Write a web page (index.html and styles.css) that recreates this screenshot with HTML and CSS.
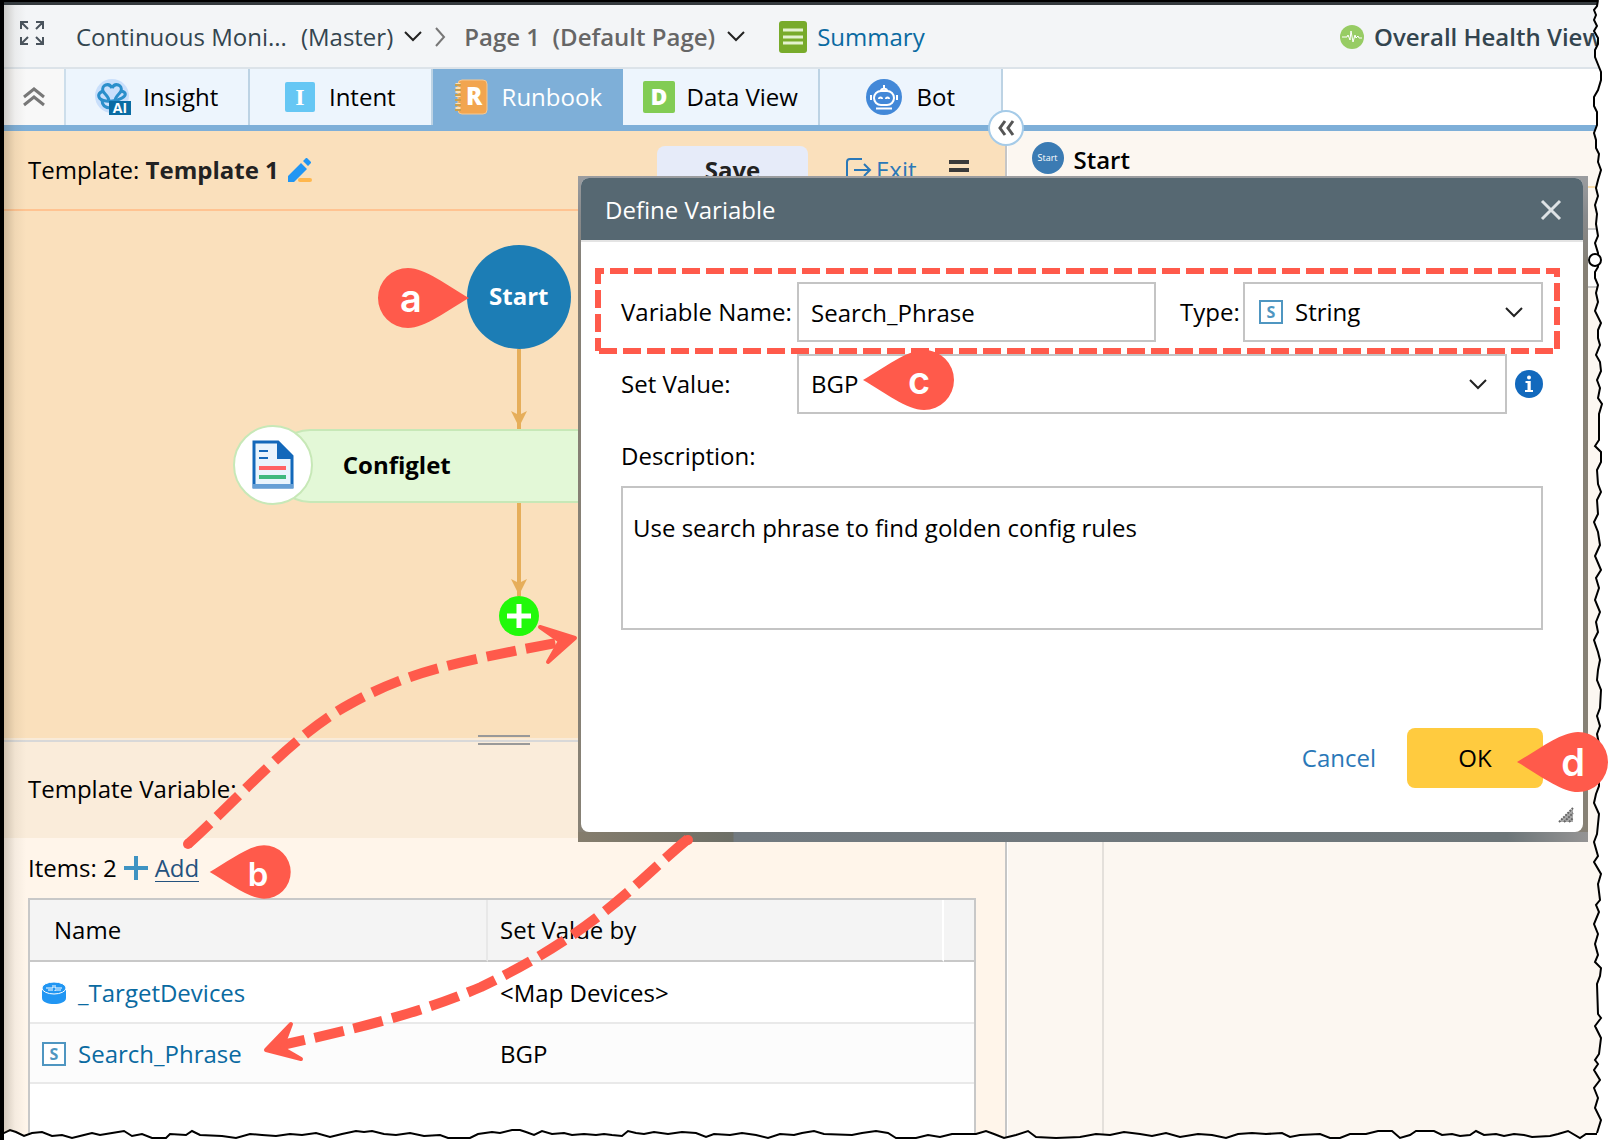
FILE: index.html
```html
<!DOCTYPE html>
<html lang="en">
<head>
<meta charset="utf-8">
<title>Runbook Template - Define Variable</title>
<link rel="stylesheet" href="styles.css">
</head>
<body>
<div class="page">
  <header class="topbar">
    <button class="icon-btn expand" aria-label="Full screen">
      <svg width="24" height="24" viewBox="0 0 24 24" fill="none" stroke="#4a545d" stroke-width="2"><path d="M1 8V1h7M1 1l7 7M16 1h7v7M23 1l-7 7M1 16v7h7M1 23l7-7M23 16v7h-7M23 23l-7-7"/></svg>
    </button>
    <nav class="crumbs">
      <a href="#" class="crumb">Continuous Moni...</a>
      <a href="#" class="crumb master">(Master)</a>
      <svg class="chev" width="18" height="12" viewBox="0 0 18 12"><path d="M1 1l8 8 8-8" fill="none" stroke="#222" stroke-width="2"/></svg>
      <svg class="sep" width="12" height="20" viewBox="0 0 12 20"><path d="M2 1l8 9-8 9" fill="none" stroke="#777" stroke-width="2"/></svg>
      <a href="#" class="crumb current">Page 1&nbsp; (Default Page)</a>
      <svg class="chev last" width="18" height="12" viewBox="0 0 18 12"><path d="M1 1l8 8 8-8" fill="none" stroke="#222" stroke-width="2"/></svg>
    </nav>
    <a href="#" class="summary">
      <svg width="28" height="32" viewBox="0 0 28 32"><rect width="28" height="32" rx="3" fill="#78ab2b"/><path d="M4 9h20M4 16h20M4 22h20" stroke="#e3f2cf" stroke-width="3"/></svg>
      Summary
    </a>
    <a href="#" class="health">
      <svg width="24" height="24" viewBox="0 0 24 24"><circle cx="12" cy="12" r="12" fill="#97cc64"/><path d="M2 12h5l1-2 2 5 1-9 2 11 2-7 1 3 2-2 1 2h3" fill="none" stroke="#fff" stroke-width="1"/></svg>
      Overall Health View
    </a>
  </header>

  <div class="tabstrip">
    <nav class="tabs">
      <button class="collapse" aria-label="Collapse">
        <svg width="22" height="20" viewBox="0 0 22 20" fill="none" stroke="#777" stroke-width="3"><path d="M1 10l10-8 10 8M1 18l10-8 10 8"/></svg>
      </button>
      <button class="tab insight">
        <svg width="36" height="36" viewBox="0 0 36 36"><circle cx="17" cy="17" r="17" fill="#c9dffb"/><g fill="none" stroke="#2b8fcb" stroke-width="3"><path d="M17 9c-3-6-11-3-9 3 1 3 6 5 6 10M17 9c3-6 11-3 9 3-1 3-6 5-6 10"/><path d="M8 12c-7 3-5 9 3 10 6 1 11 0 16-3 5-3 4-6-1-7"/><path d="M7 21c0 6 4 8 9 8"/></g><rect x="14" y="22" width="22" height="14" fill="#0b6ca3"/><text x="25" y="34" text-anchor="middle" font-family="Open Sans, sans-serif" font-weight="700" font-size="14" fill="#fff">AI</text></svg>
        Insight
      </button>
      <button class="tab intent">
        <svg width="30" height="30" viewBox="0 0 30 30"><rect width="30" height="30" rx="2" fill="#66c7f4"/><text x="15" y="23" text-anchor="middle" font-family="Liberation Serif, serif" font-weight="700" font-size="24" fill="#fff">I</text></svg>
        Intent
      </button>
      <button class="tab runbook active">
        <svg width="34" height="36" viewBox="0 0 34 36"><rect x="4" y="1" width="29" height="34" rx="4" fill="#f2a54f" stroke="#f6c892" stroke-width="1"/><path d="M4 4v28" stroke="#fbe0b8" stroke-width="5" stroke-dasharray="2 2"/><path d="M4 5v28" stroke="#c9a04e" stroke-width="6" stroke-dasharray="2 3"/><text x="20" y="26" text-anchor="middle" font-family="Open Sans, sans-serif" font-weight="800" font-size="24" fill="#fff">R</text></svg>
        Runbook
      </button>
      <button class="tab dataview">
        <svg width="32" height="32" viewBox="0 0 32 32"><rect width="32" height="32" rx="2" fill="#82cc54"/><text x="16" y="24" text-anchor="middle" font-family="Open Sans, sans-serif" font-weight="800" font-size="23" fill="#fff">D</text></svg>
        Data View
      </button>
      <button class="tab bot">
        <svg width="36" height="36" viewBox="0 0 36 36"><circle cx="18" cy="18" r="18" fill="#4288d8"/><g fill="none" stroke="#fff" stroke-width="2"><rect x="8" y="12" width="20" height="14" rx="7"/><path d="M15 12c0-3 6-3 6 0M18 9V6M5 16v5M31 16v5M10 29.500h16M13 20c0-2 3-2 3 0M20 20c0-2 3-2 3 0"/></g></svg>
        Bot
      </button>
    </nav>
    <button class="fold" aria-label="Fold panel">
      <svg width="18" height="16" viewBox="0 0 18 16" fill="none" stroke="#555" stroke-width="3"><path d="M8 1L3 8l5 7M16 1l-5 7 5 7"/></svg>
    </button>
  </div>

  <main class="work">
    <section class="left">
      <div class="template-head">
        <span>Template: <b>Template 1</b></span>
        <button class="icon-btn pencil" aria-label="Rename">
          <svg width="24" height="25" viewBox="0 0 24 25"><path d="M0 24v-6L13 5l6 6L6 24zM15 3l3-3h1l4 4v1l-3 3z" fill="#2196f3"/><rect x="10" y="20" width="14" height="4" rx="2" fill="#ffb74d"/></svg>
        </button>
        <button class="save">Save</button>
        <a href="#" class="exit">
          <svg width="25" height="24" viewBox="0 0 25 24" fill="none" stroke="#2a78b8" stroke-width="2"><path d="M16 1H4Q1 1 1 4v16q0 3 3 3h12M8 12h15M18 6l6 6-6 6"/></svg>
          Exit
        </a>
        <button class="icon-btn menu" aria-label="Menu">
          <svg width="20" height="20" viewBox="0 0 20 20"><path d="M0 2h20M0 10h20M0 18h20" stroke="#3a3a3a" stroke-width="4"/></svg>
        </button>
      </div>

      <div class="canvas">
        <div class="node-start">Start</div>
        <svg class="link" width="16" height="80" viewBox="0 0 16 80"><path d="M6 0h4v80H6zM0 62l8 4 8-4-8 16z" fill="#e6ae5a"/></svg>
        <div class="node-configlet">
          <span class="node-icon">
            <svg width="42" height="50" viewBox="0 0 42 50"><path d="M2 2h24l14 14v31H2z" fill="#e9f4fd" stroke="#1368ba" stroke-width="3"/><path d="M25 2l15 15v2H25z" fill="#1368ba"/><path d="M1 46h40" stroke="#659fd6" stroke-width="4"/><path d="M7 11h9M7 18h9" stroke="#1368ba" stroke-width="2"/><path d="M7 28h27" stroke="#ff6264" stroke-width="4"/><path d="M7 37h27" stroke="#3fb97e" stroke-width="4"/></svg>
          </span>
          Configlet
        </div>
        <svg class="link" width="16" height="93" viewBox="0 0 16 93"><path d="M6 0h4v93H6zM0 76l8 4 8-4-8 16z" fill="#e6ae5a"/></svg>
        <button class="add-node" aria-label="Add node">
          <svg width="24" height="24" viewBox="0 0 24 24"><path d="M12 0v24M0 12h24" stroke="#fff" stroke-width="5"/></svg>
        </button>
      </div>

      <div class="splitter"><span class="grip"></span></div>
      <h2 class="var-title">Template Variable:</h2>
      <div class="items-row">
        <span>Items: 2</span>
        <svg width="24" height="24" viewBox="0 0 24 24"><path d="M12 0v24M0 12h24" stroke="#3f93c2" stroke-width="4"/></svg>
        <a href="#" class="add">Add</a>
      </div>
      <div class="table-box">
        <table class="vars">
          <colgroup><col class="c1"><col class="c2"><col class="c3"></colgroup>
          <thead><tr><th class="first">Name</th><th>Set Value by</th><th></th></tr></thead>
          <tbody>
            <tr>
              <td><a href="#" class="var"><svg width="24" height="24" viewBox="0 0 24 24"><path d="M0 7v10c0 8 24 8 24 0V7z" fill="#2196f3"/><ellipse cx="12" cy="7" rx="12" ry="6" fill="#2196f3" stroke="#fff" stroke-width="1"/><path d="M4 7h7V4M11 9H6M13 4v3h7M13 10V9h6" fill="none" stroke="#fff" stroke-width="1"/></svg>_TargetDevices</a></td>
              <td>&lt;Map Devices&gt;</td><td></td>
            </tr>
            <tr class="alt">
              <td><a href="#" class="var"><span class="s-icon">S</span>Search_Phrase</a></td>
              <td>BGP</td><td></td>
            </tr>
          </tbody>
        </table>
      </div>
    </section>

    <section class="right">
      <div class="right-head"><span class="start-dot">Start</span><b>Start</b></div>
      <div class="right-tools"></div>
      <div class="right-field"></div>
      <div class="right-body"></div>
    </section>
  </main>

  <div class="backdrop">
    <form class="dialog" role="dialog" aria-label="Define Variable">
      <div class="dialog-head">
        <h1>Define Variable</h1>
        <button type="button" class="icon-btn" aria-label="Close">
          <svg width="20" height="20" viewBox="0 0 20 20"><path d="M1 1l18 18M19 1L1 19" stroke="#dde2e5" stroke-width="3"/></svg>
        </button>
      </div>
      <div class="dialog-body">
        <div class="row">
          <label class="lbl" for="vname">Variable Name:</label>
          <input class="field name" id="vname" type="text" value="Search_Phrase">
          <label class="type-lbl" for="vtype">Type:</label>
          <div class="pick type">
            <span class="s-icon">S</span>
            <select class="field" id="vtype"><option>String</option></select>
            <svg class="caret" width="18" height="12" viewBox="0 0 18 12"><path d="M1 1l8 8 8-8" fill="none" stroke="#222" stroke-width="2"/></svg>
          </div>
        </div>
        <div class="row">
          <label class="lbl" for="vvalue">Set Value:</label>
          <div class="pick value">
            <select class="field" id="vvalue"><option>BGP</option></select>
            <svg class="caret" width="18" height="12" viewBox="0 0 18 12"><path d="M1 1l8 8 8-8" fill="none" stroke="#222" stroke-width="2"/></svg>
          </div>
          <svg class="info" width="28" height="28" viewBox="0 0 28 28"><circle cx="14" cy="14" r="14" fill="#1269bd"/><path d="M10.500 12h4V21M10 21h8" fill="none" stroke="#fff" stroke-width="2"/><path d="M14 11v11" stroke="#fff" stroke-width="3"/><circle cx="14" cy="7.500" r="2" fill="#fff"/></svg>
        </div>
        <div class="row"><label class="lbl" for="vdesc">Description:</label></div>
        <textarea class="field desc" id="vdesc">Use search phrase to find golden config rules</textarea>
        <div class="actions">
          <a href="#" class="cancel">Cancel</a>
          <button type="button" class="ok">OK</button>
        </div>
      </div>
      <svg class="resize" width="16" height="16" viewBox="0 0 16 16"><path d="M1 15L15 1v14z" fill="#aaa"/><path d="M1 15L15 1M6 15l9-9M11 15l4-4" stroke="#666" stroke-width="2" stroke-dasharray="2 1"/></svg>
    </form>
  </div>

  <svg class="notes" width="1608" height="1140" viewBox="0 0 1608 1140">
    <defs><path id="drop" d="M61 0C40 -12 17 -30 0 -30A30 30 0 1 0 0 30C17 30 40 12 61 0Z"/></defs>
    <g fill="none" stroke="#ff5a4b" stroke-width="6">
      <path d="M595 271H1560" stroke-dasharray="18 6" stroke-dashoffset="9"/>
      <path d="M598 268V351" stroke-dasharray="18 6" stroke-dashoffset="2"/>
      <path d="M599 351H1555" stroke-dasharray="18 6"/>
      <path d="M1557 268V350" stroke-dasharray="18 6" stroke-dashoffset="9"/>
    </g>
    <g fill="none" stroke="#ff5a4b" stroke-width="10" stroke-dasharray="30 10">
      <path d="M188 844C240 797 294 734 350 704C406 673 450 663 556 643"/>
      <path d="M688 839C640 878 600 930 481 987C420 1013 360 1028 282 1045"/>
    </g>
    <g fill="#ff5a4b" stroke="#ff5a4b" stroke-width="4" stroke-linejoin="round">
      <path d="M540 627L575 638L548 662L560 641Z"/>
      <path d="M291 1024L266 1050L301 1059L282 1048Z"/>
    </g>
    <g fill="#ff5a4b">
      <circle cx="188" cy="844" r="5"/><circle cx="688" cy="840" r="5"/>
      <use href="#drop" transform="translate(408 298)"/>
      <use href="#drop" transform="translate(264 872) scale(-.89 .89)"/>
      <use href="#drop" transform="translate(924 380) scale(-1 1)"/>
    </g>
    <g class="note-text">
      <text x="411" y="312">a</text>
      <text x="258" y="886" class="small">b</text>
      <text x="919" y="394">c</text>
    </g>
  </svg>

  <svg class="tear-bottom" width="1608" height="16" viewBox="0 0 1608 16">
    <path d="M0 9L10 4 16 6 24 10 32 7 42 6 52 10 62 9 72 12 84 9 92 7 100 9 112 7 124 5 132 10 142 8 152 12 166 12 170 8 186 9 192 5 200 9 222 10 236 12 250 8 262 9 276 10 290 8 302 9 316 7 330 11 342 8 356 5 364 6 372 5 384 8 396 9 410 7 424 10 440 9 448 12 470 12 478 8 492 6 500 7 512 4 520 4 526 6 534 9 542 5 552 8 564 7 572 9 584 8 596 9 604 8 612 9 622 10 628 5 636 7 644 8 654 6 668 8 682 6 696 7 706 11 714 8 730 9 742 7 756 9 768 12 780 8 794 9 802 7 814 5 824 8 852 9 862 7 876 5 888 7 896 12 916 12 928 9 940 11 952 8 976 8 986 5 994 8 1004 12 1016 9 1028 5 1036 11 1056 12 1080 11 1096 8 1110 9 1124 6 1140 8 1152 10 1166 7 1180 11 1198 8 1212 9 1226 12 1238 8 1252 7 1266 8 1282 7 1290 11 1300 9 1320 8 1330 12 1340 12 1350 8 1366 8 1378 5 1392 5 1400 12 1410 9 1416 5 1434 5 1442 9 1452 8 1460 10 1470 9 1476 5 1484 9 1496 8 1504 10 1514 8 1524 9 1532 11 1550 10 1558 8 1568 5 1580 12 1586 8 1608 8V16H0Z" fill="#fff"/>
    <path d="M0 9L10 4 16 6 24 10 32 7 42 6 52 10 62 9 72 12 84 9 92 7 100 9 112 7 124 5 132 10 142 8 152 12 166 12 170 8 186 9 192 5 200 9 222 10 236 12 250 8 262 9 276 10 290 8 302 9 316 7 330 11 342 8 356 5 364 6 372 5 384 8 396 9 410 7 424 10 440 9 448 12 470 12 478 8 492 6 500 7 512 4 520 4 526 6 534 9 542 5 552 8 564 7 572 9 584 8 596 9 604 8 612 9 622 10 628 5 636 7 644 8 654 6 668 8 682 6 696 7 706 11 714 8 730 9 742 7 756 9 768 12 780 8 794 9 802 7 814 5 824 8 852 9 862 7 876 5 888 7 896 12 916 12 928 9 940 11 952 8 976 8 986 5 994 8 1004 12 1016 9 1028 5 1036 11 1056 12 1080 11 1096 8 1110 9 1124 6 1140 8 1152 10 1166 7 1180 11 1198 8 1212 9 1226 12 1238 8 1252 7 1266 8 1282 7 1290 11 1300 9 1320 8 1330 12 1340 12 1350 8 1366 8 1378 5 1392 5 1400 12 1410 9 1416 5 1434 5 1442 9 1452 8 1460 10 1470 9 1476 5 1484 9 1496 8 1504 10 1514 8 1524 9 1532 11 1550 10 1558 8 1568 5 1580 12 1586 8 1600 8" fill="none" stroke="#000" stroke-width="2"/>
  </svg>

  <svg class="tear-right" width="22" height="1140" viewBox="0 0 22 1140">
    <path d="M12 0L11 6 8 10 10 15 8 20 11 26 8 31 12 38 12 44 9 50 9 57 13 67 15 72 15 80 12 90 8 97 8 106 11 112 11 125 8 133 10 140 10 148 13 154 12 162 15 170 12 180 10 188 12 196 9 205 11 214 10 224 12 236 9 243 12 253V267L9 272 9 278 12 285 10 293 12 302 9 311 15 323 12 330 12 338 14 345 10 355 14 362 15 371 11 380 14 388 12 398 16 404 13 414V440L9 446 15 452 15 462 11 470 12 484 15 492 11 500 12 514 8 522 12 532 14 545 9 556 15 570 10 578 13 588 9 600 14 612 10 622 12 632 8 640 12 652 14 660 12 670 11 680 15 690 14 708 11 716 14 726 11 734 13 744V786L10 794 8 803 13 814 11 834 8 842 12 856 8 862 15 874 12 884 14 900 10 905 13 912 8 924 12 934 9 944 12 955 9 962 15 968 14 976 11 984 12 1014 15 1018 9 1026 15 1038 13 1054 9 1060 12 1064 8 1070 14 1080 8 1088 12 1098 9 1108 12 1114 15 1120 11 1133V1140H22V0Z" fill="#fff"/>
    <path d="M12 0L11 6 8 10 10 15 8 20 11 26 8 31 12 38 12 44 9 50 9 57 13 67 15 72 15 80 12 90 8 97 8 106 11 112 11 125 8 133 10 140 10 148 13 154 12 162 15 170 12 180 10 188 12 196 9 205 11 214 10 224 12 236 9 243 12 253V267L9 272 9 278 12 285 10 293 12 302 9 311 15 323 12 330 12 338 14 345 10 355 14 362 15 371 11 380 14 388 12 398 16 404 13 414V440L9 446 15 452 15 462 11 470 12 484 15 492 11 500 12 514 8 522 12 532 14 545 9 556 15 570 10 578 13 588 9 600 14 612 10 622 12 632 8 640 12 652 14 660 12 670 11 680 15 690 14 708 11 716 14 726 11 734 13 744V786L10 794 8 803 13 814 11 834 8 842 12 856 8 862 15 874 12 884 14 900 10 905 13 912 8 924 12 934 9 944 12 955 9 962 15 968 14 976 11 984 12 1014 15 1018 9 1026 15 1038 13 1054 9 1060 12 1064 8 1070 14 1080 8 1088 12 1098 9 1108 12 1114 15 1120 11 1133" fill="none" stroke="#000" stroke-width="2"/>
    <ellipse cx="9" cy="260" rx="6" ry="6" fill="#fff" stroke="#000" stroke-width="2"/>
  </svg>

  <svg class="marker-d" width="92" height="60" viewBox="0 0 92 60">
    <use href="#drop" transform="translate(61 30) scale(-1 1)" fill="#ff5a4b"/>
    <g class="note-text"><text x="56" y="44">d</text></g>
  </svg>
</div>
</body>
</html>
```
FILE: styles.css
```css
* { box-sizing: border-box; }
body {
  margin: 0;
  font: 24px/32px "Open Sans", "Noto Sans", sans-serif;
  color: #000;
  background: #fff;
}
a { text-decoration: none; }
button { font: inherit; color: inherit; border: 0; padding: 0; background: none; }
svg { display: block; flex: none; overflow: visible; }
b { font-weight: 600; }
.icon-btn { display: flex; }

.page {
  position: relative;
  min-height: 100vh;
  display: flex;
  flex-direction: column;
  border-left: 4px solid #000;
  overflow: hidden;
}
.page::before { content: ""; position: absolute; inset: 0 0 auto 0; height: 2px; background: #000; }
.page::after {
  content: "";
  position: absolute;
  inset: 5px auto 8px 0;
  width: 22px;
  background: linear-gradient(90deg, rgba(60, 50, 30, .22), rgba(60, 50, 30, .05) 50%, transparent);
  pointer-events: none;
}

/* Top bar */
.topbar {
  display: flex;
  align-items: center;
  height: 69px;
  padding: 2px 6px 0 16px;
  border-top: 5px solid #343a3e;
  border-bottom: 2px solid #dce3e9;
  background: #f3f5f7;
}
.expand { margin: 0 32px 8px 0; }
.crumbs { display: flex; align-items: center; }
.crumb { color: #33454f; white-space: nowrap; }
.master { margin: 0 11px 0 14px; }
.current { color: #666; font-weight: 600; margin: 0 12px 0 18px; }
.sep { margin-left: 12px; }
.last { margin-right: 34px; }
.summary { display: flex; align-items: center; gap: 10px; color: #0a6aa1; }
.health {
  display: flex;
  align-items: center;
  gap: 10px;
  margin-left: auto;
  color: #33454f;
  font-weight: 600;
  white-space: nowrap;
}

/* Tabs */
.tabstrip { position: relative; height: 62px; border-bottom: 6px solid #7eafd8; background: #fff; }
.tabs { display: flex; width: calc(62.5% - 3px); height: 56px; }
.collapse {
  width: 62px;
  flex: none;
  display: grid;
  place-items: center;
  background: #f8f8f8;
  border-right: 2px solid #cddeeb;
}
.tab {
  flex: 183 1 0;
  display: flex;
  align-items: center;
  justify-content: center;
  gap: 14px;
  color: #000;
  background: #edf5fd;
  border-right: 2px solid #bdd3e4;
  white-space: nowrap;
}
.insight, .dataview { gap: 12px; }
.runbook { flex-grow: 191; border: 0; }
.dataview { flex-grow: 197; }
.tab.active { background: #7eafd8; color: #fff; }
.fold {
  position: absolute;
  left: 62.5%;
  top: 41px;
  width: 36px;
  height: 36px;
  margin-left: -19px;
  display: grid;
  place-items: center;
  border: 2px solid #a5cbe8;
  border-radius: 50%;
  background: #fff;
  z-index: 1;
}

/* Work area */
.work { flex: 1; display: grid; grid-template-columns: 62.5% 1fr; }
.left {
  display: flex;
  flex-direction: column;
  border-right: 2px solid #c6c6c6;
  background: #fff5ea;
  min-width: 0;
}
.template-head {
  display: flex;
  align-items: center;
  height: 80px;
  padding: 0 36px 0 24px;
  background: #fae0bc;
  border-bottom: 2px solid #ffc391;
}
.template-head b { color: #222; font-weight: 700; }
.pencil { margin-left: 9px; }
.save {
  width: 151px;
  height: 48px;
  margin-left: auto;
  border-radius: 8px;
  background: #e6ebf9;
  color: #222;
  font-weight: 700;
}
.exit { display: flex; align-items: center; gap: 5px; margin: 0 32px 0 38px; color: #2a78b8; }
.canvas {
  display: flex;
  flex-direction: column;
  align-items: center;
  height: 527px;
  padding: 34px 0 0 29px;
  background: #fae0bc;
}
.node-start {
  width: 104px;
  height: 104px;
  border-radius: 50%;
  background: #1c7db5;
  color: #fff;
  font-weight: 700;
  line-height: 102px;
  text-align: center;
}
.node-configlet {
  display: flex;
  align-items: center;
  gap: 30px;
  width: 492px;
  height: 74px;
  padding-bottom: 3px;
  border: 2px solid #c7e8b7;
  border-radius: 37px;
  background: #e3f8d7;
  color: #000;
  font-weight: 700;
}
.node-icon {
  display: grid;
  place-items: center;
  width: 80px;
  height: 80px;
  margin-left: -42px;
  border: 2px solid #c7e8b7;
  border-radius: 50%;
  background: #fff;
}
.add-node {
  display: grid;
  place-items: center;
  width: 40px;
  height: 40px;
  border-radius: 50%;
  background: #21f90a;
}
.splitter {
  display: grid;
  justify-content: center;
  align-content: center;
  height: 4px;
  border-top: 2px solid #f9ebd8;
  border-bottom: 2px solid #d8d8d8;
}
.grip { width: 52px; height: 10px; border: solid #999; border-width: 2px 0; z-index: 1; }
.var-title { margin: 0; padding: 31px 24px 33px; font-size: 24px; font-weight: 400; background: #faecda; }
.items-row { display: flex; align-items: center; gap: 7px; height: 60px; padding-left: 24px; }
.add { color: #24527e; line-height: 26px; border-bottom: 1px solid #24527e; }
.table-box { flex: 1; margin: 0 29px 0 24px; border: 2px solid #c8c8c8; background: #fff; }
.vars { width: 100%; table-layout: fixed; border-collapse: separate; border-spacing: 0; }
.c1 { width: 458px; }
.c3 { width: 30px; }
.vars th { height: 62px; padding: 0 12px; text-align: left; font-weight: 400; background: #f4f4f4; border-bottom: 2px solid #c8c8c8; border-right: 2px solid #fff; }
.vars th.first { padding-left: 24px; border-right-color: #e8e8e8; }
.vars th:last-child { border-right: 0; }
.vars td { height: 62px; padding: 2px 12px 0; border-bottom: 2px solid #e9e9e9; }
.vars .alt td { height: 60px; background: #fcfcfc; }
.var { display: flex; align-items: center; gap: 12px; color: #0a6aa1; }
.s-icon {
  width: 24px;
  height: 24px;
  border: 2px solid #4f96c1;
  background: #fff;
  color: #4f96c1;
  font-size: 16px;
  font-weight: 700;
  line-height: 20px;
  text-align: center;
}

.right { display: flex; flex-direction: column; background: #fcf7f1; border-left: 1px solid #fff; }
.right-head { display: flex; align-items: center; gap: 10px; height: 57px; padding: 0 24px 2px; border-bottom: 2px solid #fbdfae; }
.right-head b { padding-top: 4px; }
.start-dot {
  width: 32px;
  height: 32px;
  border-radius: 50%;
  background: #3b7bb3;
  color: #fff;
  font-size: 9px;
  text-align: center;
}
.right-tools { height: 42px; border-bottom: 2px solid #c8c8c8; }
.right-field { height: 58px; background: #fff; border-bottom: 2px solid #c8c8c8; }
.right-body { flex: 1; margin-left: 94px; border-left: 2px solid #e4e0db; }

/* Dialog */
.backdrop {
  position: absolute;
  left: 574px;
  right: 20px;
  top: 176px;
  padding: 2px 5px 10px 3px;
  background:
    linear-gradient(90deg, #857d6d, #6d6f67 155px, #727a80 156px, #6d7679 92%, #959494) bottom / 100% 10px no-repeat,
    linear-gradient(#9b9da0, #888a8c 40px, #868075 90px, #878175);
}
.dialog { position: relative; border-radius: 8px; background: #fff; overflow: hidden; }
.dialog-head {
  display: flex;
  align-items: center;
  justify-content: space-between;
  height: 64px;
  padding: 2px 22px 0 24px;
  background: #566872;
  border-bottom: 2px solid #e4e4e4;
  color: #fff;
}
.dialog-head h1 { margin: 0; font-size: 24px; font-weight: 400; }
.dialog-body { display: flex; flex-direction: column; gap: 12px; padding: 40px 40px 44px; }
.row { display: flex; align-items: center; height: 60px; }
.lbl { width: 176px; flex: none; white-space: nowrap; }
.field {
  width: 100%;
  height: 60px;
  padding: 0 12px;
  border: 2px solid #c4c4c4;
  border-radius: 0;
  background: #fff;
  color: #000;
  font: inherit;
  appearance: none;
}
.name { flex: 1 1 359px; min-width: 0; }
.type-lbl { width: 87px; flex: none; padding-left: 24px; }
.pick { position: relative; }
.pick.type { flex: 1 1 300px; }
.pick.value { flex: 1; }
.type .field { padding-left: 50px; }
.type .s-icon { position: absolute; left: 16px; top: 18px; }
.caret { position: absolute; right: 20px; top: 25px; }
.info { margin-left: 8px; }
.desc { height: 144px; margin-top: -12px; padding: 24px 10px; resize: none; overflow: hidden; }
.actions { display: flex; align-items: center; justify-content: flex-end; gap: 31px; margin-top: 86px; }
.cancel { color: #2a78b8; }
.ok { width: 136px; height: 60px; border-radius: 8px; background: #ffcb3f; }
.resize { position: absolute; right: 9px; bottom: 9px; }

/* Annotations */
.notes { position: absolute; left: -4px; top: 0; pointer-events: none; }
.note-text { font: 600 38px Inter, "Liberation Sans", sans-serif; fill: #fff; text-anchor: middle; }
.note-text .small { font-size: 33px; }
.tear-bottom { position: absolute; left: -4px; bottom: -2px; }
.tear-right { position: absolute; right: 0; top: 0; }
.marker-d { position: absolute; right: -1px; top: 732px; }
```
